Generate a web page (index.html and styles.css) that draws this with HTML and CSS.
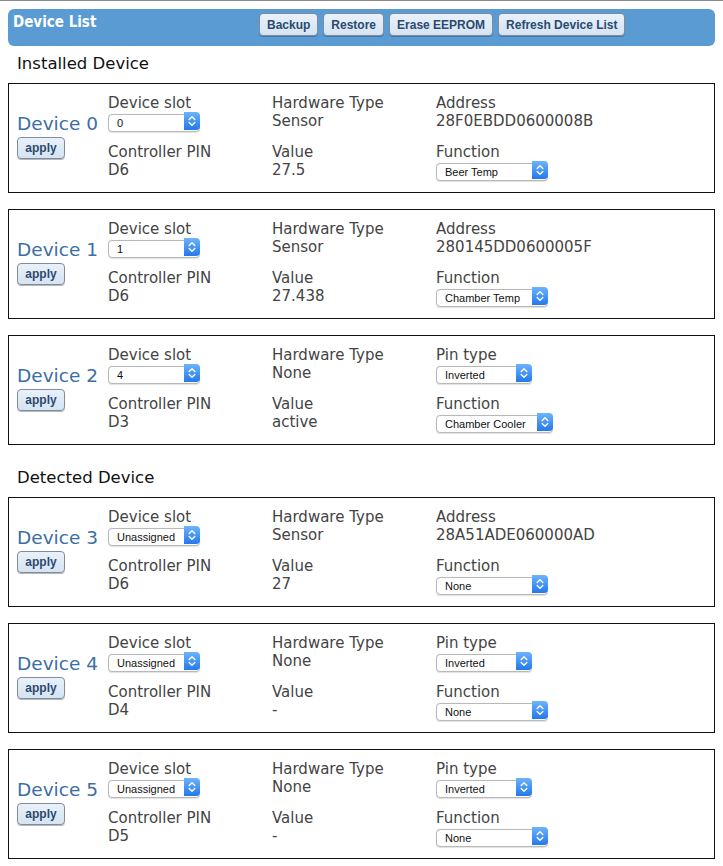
FILE: index.html
```html
<!DOCTYPE html>
<html lang="en">
<head>
<meta charset="utf-8">
<title>Device List</title>
<link rel="stylesheet" href="styles.css">
</head>
<body>
<div class="page">
  <header class="topbar">
    <div class="topbar-title">Device List</div>
    <div class="topbar-actions">
      <button class="tbtn">Backup</button>
      <button class="tbtn">Restore</button>
      <button class="tbtn">Erase EEPROM</button>
      <button class="tbtn">Refresh Device List</button>
    </div>
  </header>

  <h2 class="section-title">Installed Device</h2>

  <section class="card">
    <div class="dev-id">
      <div class="dev-name">Device 0</div>
      <button class="apply">apply</button>
    </div>
    <div class="fields">
      <div class="field"><div class="lbl">Device slot</div>
        <span class="sel w-slot"><select class="sel-input"><option>0</option></select><span class="sel-btn"><svg viewBox="0 0 16 18" width="16" height="18"><path d="M5.2 7.6 L8 4.8 L10.8 7.6 M5.2 10.4 L8 13.2 L10.8 10.4"/></svg></span></span></div>
      <div class="field"><div class="lbl">Hardware Type</div><div class="val">Sensor</div></div>
      <div class="field"><div class="lbl">Address</div><div class="val">28F0EBDD0600008B</div></div>
      <div class="field"><div class="lbl">Controller PIN</div><div class="val">D6</div></div>
      <div class="field"><div class="lbl">Value</div><div class="val">27.5</div></div>
      <div class="field"><div class="lbl">Function</div>
        <span class="sel w-func"><select class="sel-input"><option>Beer Temp</option></select><span class="sel-btn"><svg viewBox="0 0 16 18" width="16" height="18"><path d="M5.2 7.6 L8 4.8 L10.8 7.6 M5.2 10.4 L8 13.2 L10.8 10.4"/></svg></span></span></div>
    </div>
  </section>

  <section class="card">
    <div class="dev-id">
      <div class="dev-name">Device 1</div>
      <button class="apply">apply</button>
    </div>
    <div class="fields">
      <div class="field"><div class="lbl">Device slot</div>
        <span class="sel w-slot"><select class="sel-input"><option>1</option></select><span class="sel-btn"><svg viewBox="0 0 16 18" width="16" height="18"><path d="M5.2 7.6 L8 4.8 L10.8 7.6 M5.2 10.4 L8 13.2 L10.8 10.4"/></svg></span></span></div>
      <div class="field"><div class="lbl">Hardware Type</div><div class="val">Sensor</div></div>
      <div class="field"><div class="lbl">Address</div><div class="val">280145DD0600005F</div></div>
      <div class="field"><div class="lbl">Controller PIN</div><div class="val">D6</div></div>
      <div class="field"><div class="lbl">Value</div><div class="val">27.438</div></div>
      <div class="field"><div class="lbl">Function</div>
        <span class="sel w-func"><select class="sel-input"><option>Chamber Temp</option></select><span class="sel-btn"><svg viewBox="0 0 16 18" width="16" height="18"><path d="M5.2 7.6 L8 4.8 L10.8 7.6 M5.2 10.4 L8 13.2 L10.8 10.4"/></svg></span></span></div>
    </div>
  </section>

  <section class="card">
    <div class="dev-id">
      <div class="dev-name">Device 2</div>
      <button class="apply">apply</button>
    </div>
    <div class="fields">
      <div class="field"><div class="lbl">Device slot</div>
        <span class="sel w-slot"><select class="sel-input"><option>4</option></select><span class="sel-btn"><svg viewBox="0 0 16 18" width="16" height="18"><path d="M5.2 7.6 L8 4.8 L10.8 7.6 M5.2 10.4 L8 13.2 L10.8 10.4"/></svg></span></span></div>
      <div class="field"><div class="lbl">Hardware Type</div><div class="val">None</div></div>
      <div class="field"><div class="lbl">Pin type</div>
        <span class="sel w-pin"><select class="sel-input"><option>Inverted</option></select><span class="sel-btn"><svg viewBox="0 0 16 18" width="16" height="18"><path d="M5.2 7.6 L8 4.8 L10.8 7.6 M5.2 10.4 L8 13.2 L10.8 10.4"/></svg></span></span></div>
      <div class="field"><div class="lbl">Controller PIN</div><div class="val">D3</div></div>
      <div class="field"><div class="lbl">Value</div><div class="val">active</div></div>
      <div class="field"><div class="lbl">Function</div>
        <span class="sel w-cooler"><select class="sel-input"><option>Chamber Cooler</option></select><span class="sel-btn"><svg viewBox="0 0 16 18" width="16" height="18"><path d="M5.2 7.6 L8 4.8 L10.8 7.6 M5.2 10.4 L8 13.2 L10.8 10.4"/></svg></span></span></div>
    </div>
  </section>

  <h2 class="section-title">Detected Device</h2>

  <section class="card">
    <div class="dev-id">
      <div class="dev-name">Device 3</div>
      <button class="apply">apply</button>
    </div>
    <div class="fields">
      <div class="field"><div class="lbl">Device slot</div>
        <span class="sel w-slot"><select class="sel-input"><option>Unassigned</option></select><span class="sel-btn"><svg viewBox="0 0 16 18" width="16" height="18"><path d="M5.2 7.6 L8 4.8 L10.8 7.6 M5.2 10.4 L8 13.2 L10.8 10.4"/></svg></span></span></div>
      <div class="field"><div class="lbl">Hardware Type</div><div class="val">Sensor</div></div>
      <div class="field"><div class="lbl">Address</div><div class="val">28A51ADE060000AD</div></div>
      <div class="field"><div class="lbl">Controller PIN</div><div class="val">D6</div></div>
      <div class="field"><div class="lbl">Value</div><div class="val">27</div></div>
      <div class="field"><div class="lbl">Function</div>
        <span class="sel w-func"><select class="sel-input"><option>None</option></select><span class="sel-btn"><svg viewBox="0 0 16 18" width="16" height="18"><path d="M5.2 7.6 L8 4.8 L10.8 7.6 M5.2 10.4 L8 13.2 L10.8 10.4"/></svg></span></span></div>
    </div>
  </section>

  <section class="card">
    <div class="dev-id">
      <div class="dev-name">Device 4</div>
      <button class="apply">apply</button>
    </div>
    <div class="fields">
      <div class="field"><div class="lbl">Device slot</div>
        <span class="sel w-slot"><select class="sel-input"><option>Unassigned</option></select><span class="sel-btn"><svg viewBox="0 0 16 18" width="16" height="18"><path d="M5.2 7.6 L8 4.8 L10.8 7.6 M5.2 10.4 L8 13.2 L10.8 10.4"/></svg></span></span></div>
      <div class="field"><div class="lbl">Hardware Type</div><div class="val">None</div></div>
      <div class="field"><div class="lbl">Pin type</div>
        <span class="sel w-pin"><select class="sel-input"><option>Inverted</option></select><span class="sel-btn"><svg viewBox="0 0 16 18" width="16" height="18"><path d="M5.2 7.6 L8 4.8 L10.8 7.6 M5.2 10.4 L8 13.2 L10.8 10.4"/></svg></span></span></div>
      <div class="field"><div class="lbl">Controller PIN</div><div class="val">D4</div></div>
      <div class="field"><div class="lbl">Value</div><div class="val">-</div></div>
      <div class="field"><div class="lbl">Function</div>
        <span class="sel w-func"><select class="sel-input"><option>None</option></select><span class="sel-btn"><svg viewBox="0 0 16 18" width="16" height="18"><path d="M5.2 7.6 L8 4.8 L10.8 7.6 M5.2 10.4 L8 13.2 L10.8 10.4"/></svg></span></span></div>
    </div>
  </section>

  <section class="card">
    <div class="dev-id">
      <div class="dev-name">Device 5</div>
      <button class="apply">apply</button>
    </div>
    <div class="fields">
      <div class="field"><div class="lbl">Device slot</div>
        <span class="sel w-slot"><select class="sel-input"><option>Unassigned</option></select><span class="sel-btn"><svg viewBox="0 0 16 18" width="16" height="18"><path d="M5.2 7.6 L8 4.8 L10.8 7.6 M5.2 10.4 L8 13.2 L10.8 10.4"/></svg></span></span></div>
      <div class="field"><div class="lbl">Hardware Type</div><div class="val">None</div></div>
      <div class="field"><div class="lbl">Pin type</div>
        <span class="sel w-pin"><select class="sel-input"><option>Inverted</option></select><span class="sel-btn"><svg viewBox="0 0 16 18" width="16" height="18"><path d="M5.2 7.6 L8 4.8 L10.8 7.6 M5.2 10.4 L8 13.2 L10.8 10.4"/></svg></span></span></div>
      <div class="field"><div class="lbl">Controller PIN</div><div class="val">D5</div></div>
      <div class="field"><div class="lbl">Value</div><div class="val">-</div></div>
      <div class="field"><div class="lbl">Function</div>
        <span class="sel w-func"><select class="sel-input"><option>None</option></select><span class="sel-btn"><svg viewBox="0 0 16 18" width="16" height="18"><path d="M5.2 7.6 L8 4.8 L10.8 7.6 M5.2 10.4 L8 13.2 L10.8 10.4"/></svg></span></span></div>
    </div>
  </section>
</div>
</body>
</html>
```

FILE: styles.css
```css
html {
  border-top: 1px solid #8a8a8a;
  background: #fff;
}

body {
  margin: 8px 8px 0 8px;
  font-family: "DejaVu Sans", "Liberation Sans", sans-serif;
  color: #444;
}

.page {
  display: flex;
  flex-direction: column;
}

/* ---------- top bar ---------- */
.topbar {
  display: flex;
  align-items: flex-start;
  box-sizing: border-box;
  height: 37px;
  padding: 4px 5px;
  background: #5b9bd3;
  border-radius: 6px;
}

.topbar-title {
  width: 246px;
  flex: none;
  font-family: "DejaVu Sans Condensed", "DejaVu Sans", sans-serif;
  font-stretch: condensed;
  font-weight: bold;
  font-size: 15px;
  line-height: 19px;
  color: #fff;
}

.topbar-actions {
  display: flex;
  gap: 5px;
}

.tbtn,
.apply {
  box-sizing: border-box;
  height: 23px;
  padding: 0 7px;
  font-family: "Liberation Sans", Arial, sans-serif;
  font-weight: bold;
  font-size: 12px;
  color: #2c4a6e;
  background: linear-gradient(#e9f1fa, #d5e3f3);
  border: 1px solid #7f8c9b;
  border-radius: 4px;
  box-shadow: 0 1px 0 rgba(40, 50, 60, 0.35);
  cursor: pointer;
}

/* ---------- section titles ---------- */
.section-title {
  margin: 6px 0 7px 9px;
  font-size: 16.5px;
  font-weight: normal;
  line-height: 24px;
  color: #111;
}

.card + .section-title {
  margin-top: 5px;
}

/* ---------- device cards ---------- */
.card {
  display: flex;
  align-items: center;
  padding: 10px 8px 13px 8px;
  border: 1px solid #111;
  margin-bottom: 16px;
}

.card:last-child {
  margin-bottom: 0;
}

.dev-id {
  flex: none;
  width: 91px;
  display: flex;
  flex-direction: column;
  align-items: flex-start;
}

.dev-name {
  font-size: 18.5px;
  line-height: 20px;
  color: #3c6ea6;
  margin-bottom: 3px;
  white-space: nowrap;
}

.apply {
  height: 22px;
  width: 48px;
  padding: 0;
}

.fields {
  flex: 1;
  display: grid;
  grid-template-columns: 164px 164px 1fr;
  row-gap: 13px;
}

.field {
  display: flex;
  flex-direction: column;
  align-items: flex-start;
}

.lbl,
.val {
  font-size: 15px;
  line-height: 18px;
  color: #444;
  white-space: nowrap;
}

/* ---------- select ---------- */
.sel {
  position: relative;
  display: inline-block;
  height: 18px;
}

.w-slot { width: 92px; }
.w-func { width: 112px; }
.w-pin { width: 96px; }
.w-cooler { width: 117px; }

.sel-input {
  -webkit-appearance: none;
  appearance: none;
  box-sizing: border-box;
  width: 100%;
  height: 18px;
  margin: 0;
  padding: 0 18px 0 8px;
  font-family: "Liberation Sans", Arial, sans-serif;
  font-size: 11px;
  color: #111;
  background: #fff;
  border: 1px solid #b9b9b9;
  border-radius: 4px;
  box-shadow: 0 0.5px 1px rgba(0, 0, 0, 0.12);
  outline: none;
}

.sel-btn {
  position: absolute;
  top: 0;
  right: 0;
  width: 16px;
  height: 18px;
  background: linear-gradient(#6db4fb, #2378ec);
  border-radius: 0 4px 4px 0;
  pointer-events: none;
}

.sel-btn svg {
  display: block;
}

.sel-btn path {
  fill: none;
  stroke: #fff;
  stroke-width: 1.4;
  stroke-linecap: round;
  stroke-linejoin: round;
}
```
